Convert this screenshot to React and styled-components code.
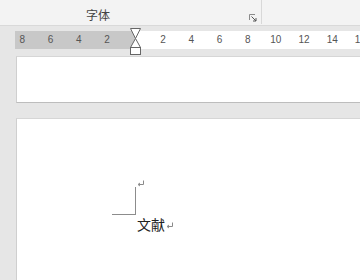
import React from "react";
import styled, { createGlobalStyle } from "styled-components";

const GlobalStyle = createGlobalStyle`
  html, body {
    margin: 0;
    padding: 0;
    background: #e6e6e6;
    font-family: "Noto Sans CJK SC", "Liberation Sans", sans-serif;
    overflow: hidden;
  }
`;

const leftNums = ["8", "6", "4", "2"];
const rightNums = ["2", "4", "6", "8", "10", "12", "14", "16"];

const ReturnMark = ({ color = "#8a8a8a" }) => (
  <svg width="8" height="7" viewBox="0 0 8 7">
    <path d="M6.5 0.5 V4.5 H1.5" fill="none" stroke={color} strokeWidth="1" />
    <path d="M3 3 L1 4.5 L3 6" fill="none" stroke={color} strokeWidth="1" />
  </svg>
);

const Launcher = () => (
  <svg width="8" height="8" viewBox="0 0 8 8">
    <path d="M0.5 6 V0.5 H6" fill="none" stroke="#8a8a8a" strokeWidth="1" />
    <path d="M2.5 2.5 L7 7 M7 4 V7 H4" fill="none" stroke="#555" strokeWidth="1" />
  </svg>
);

const IndentMarker = () => (
  <svg width="13" height="28" viewBox="0 0 13 28">
    <path d="M1.5 0.5 H11.5 L6.5 10.5 Z" fill="#fff" stroke="#666" />
    <path d="M6.5 10.5 L11.5 19.5 H1.5 Z" fill="#fff" stroke="#666" />
    <rect x="1.5" y="19.5" width="10" height="7" fill="#fff" stroke="#666" />
  </svg>
);

export default function App() {
  return (
    <>
      <GlobalStyle />
      <Ribbon>
        <Group>
          <GroupLabel>字体</GroupLabel>
          <LauncherSlot>
            <Launcher />
          </LauncherSlot>
        </Group>
      </Ribbon>
      <Workspace>
        <Ruler>
          <RulerMargin>
            {leftNums.map((n, i) => (
              <Tick key={"l" + i}>{n}</Tick>
            ))}
          </RulerMargin>
          <RulerText>
            {rightNums.map((n, i) => (
              <Tick key={"r" + i}>{n}</Tick>
            ))}
          </RulerText>
          <MarkerSlot>
            <IndentMarker />
          </MarkerSlot>
        </Ruler>
        <PageTail />
        <Page>
          <CornerRow>
            <Corner />
            <MarkSlot>
              <ReturnMark />
            </MarkSlot>
          </CornerRow>
          <TextLine>
            文献
            <ReturnMark />
          </TextLine>
        </Page>
      </Workspace>
    </>
  );
}

const Ribbon = styled.div`
  height: 26px;
  background: #f3f3f3;
  border-bottom: 1px solid #d9d9d9;
  display: flex;
  box-sizing: border-box;
`;

const Group = styled.div`
  width: 262px;
  border-right: 1px solid #d8d8d8;
  display: flex;
  align-items: flex-end;
  padding-bottom: 2px;
  box-sizing: border-box;
  height: 24px;
`;

const GroupLabel = styled.span`
  margin-left: 86px;
  font-size: 12px;
  line-height: 14px;
  color: #444;
`;

const LauncherSlot = styled.span`
  margin-left: auto;
  margin-right: 4px;
  display: flex;
`;

const Workspace = styled.div`
  padding-top: 5px;
`;

const Ruler = styled.div`
  position: relative;
  margin-left: 15px;
  height: 18px;
  display: flex;
  font-family: "Liberation Sans", Arial, sans-serif;
  font-size: 10px;
  color: #555;
`;

const RulerMargin = styled.div`
  width: 120px;
  background: #c8c8c8;
  display: flex;
  justify-content: flex-end;
  padding-right: 14px;
  box-sizing: border-box;
  overflow: hidden;
`;

const RulerText = styled.div`
  flex: 1;
  background: #fff;
  display: flex;
  padding-left: 14px;
  overflow: hidden;
`;

const Tick = styled.span`
  flex: 0 0 28.2px;
  text-align: center;
  line-height: 18px;
`;

const MarkerSlot = styled.div`
  position: absolute;
  left: 114px;
  top: -3px;
  display: flex;
`;

const PageTail = styled.div`
  margin: 7px 0 0 16px;
  height: 45px;
  background: #fff;
  border-top: 1px solid #d6d6d6;
  border-left: 1px solid #cfcfcf;
  border-bottom: 1px solid #bdbdbd;
`;

const Page = styled.div`
  margin: 15px 0 0 16px;
  height: 170px;
  background: #fff;
  border-top: 1px solid #d6d6d6;
  border-left: 1px solid #cfcfcf;
  padding: 68px 0 0 95px;
  box-sizing: border-box;
`;

const CornerRow = styled.div`
  display: flex;
  align-items: flex-start;
`;

const Corner = styled.div`
  width: 23px;
  height: 27px;
  border-right: 1px solid #8c8c8c;
  border-bottom: 1px solid #8c8c8c;
`;

const MarkSlot = styled.span`
  display: flex;
  margin: -7px 0 0 1px;
`;

const TextLine = styled.div`
  margin: 1px 0 0 25px;
  display: flex;
  align-items: flex-end;
  font-size: 14px;
  line-height: 17px;
  color: #222;
  gap: 1px;

  svg {
    margin-bottom: 4px;
  }
`;
